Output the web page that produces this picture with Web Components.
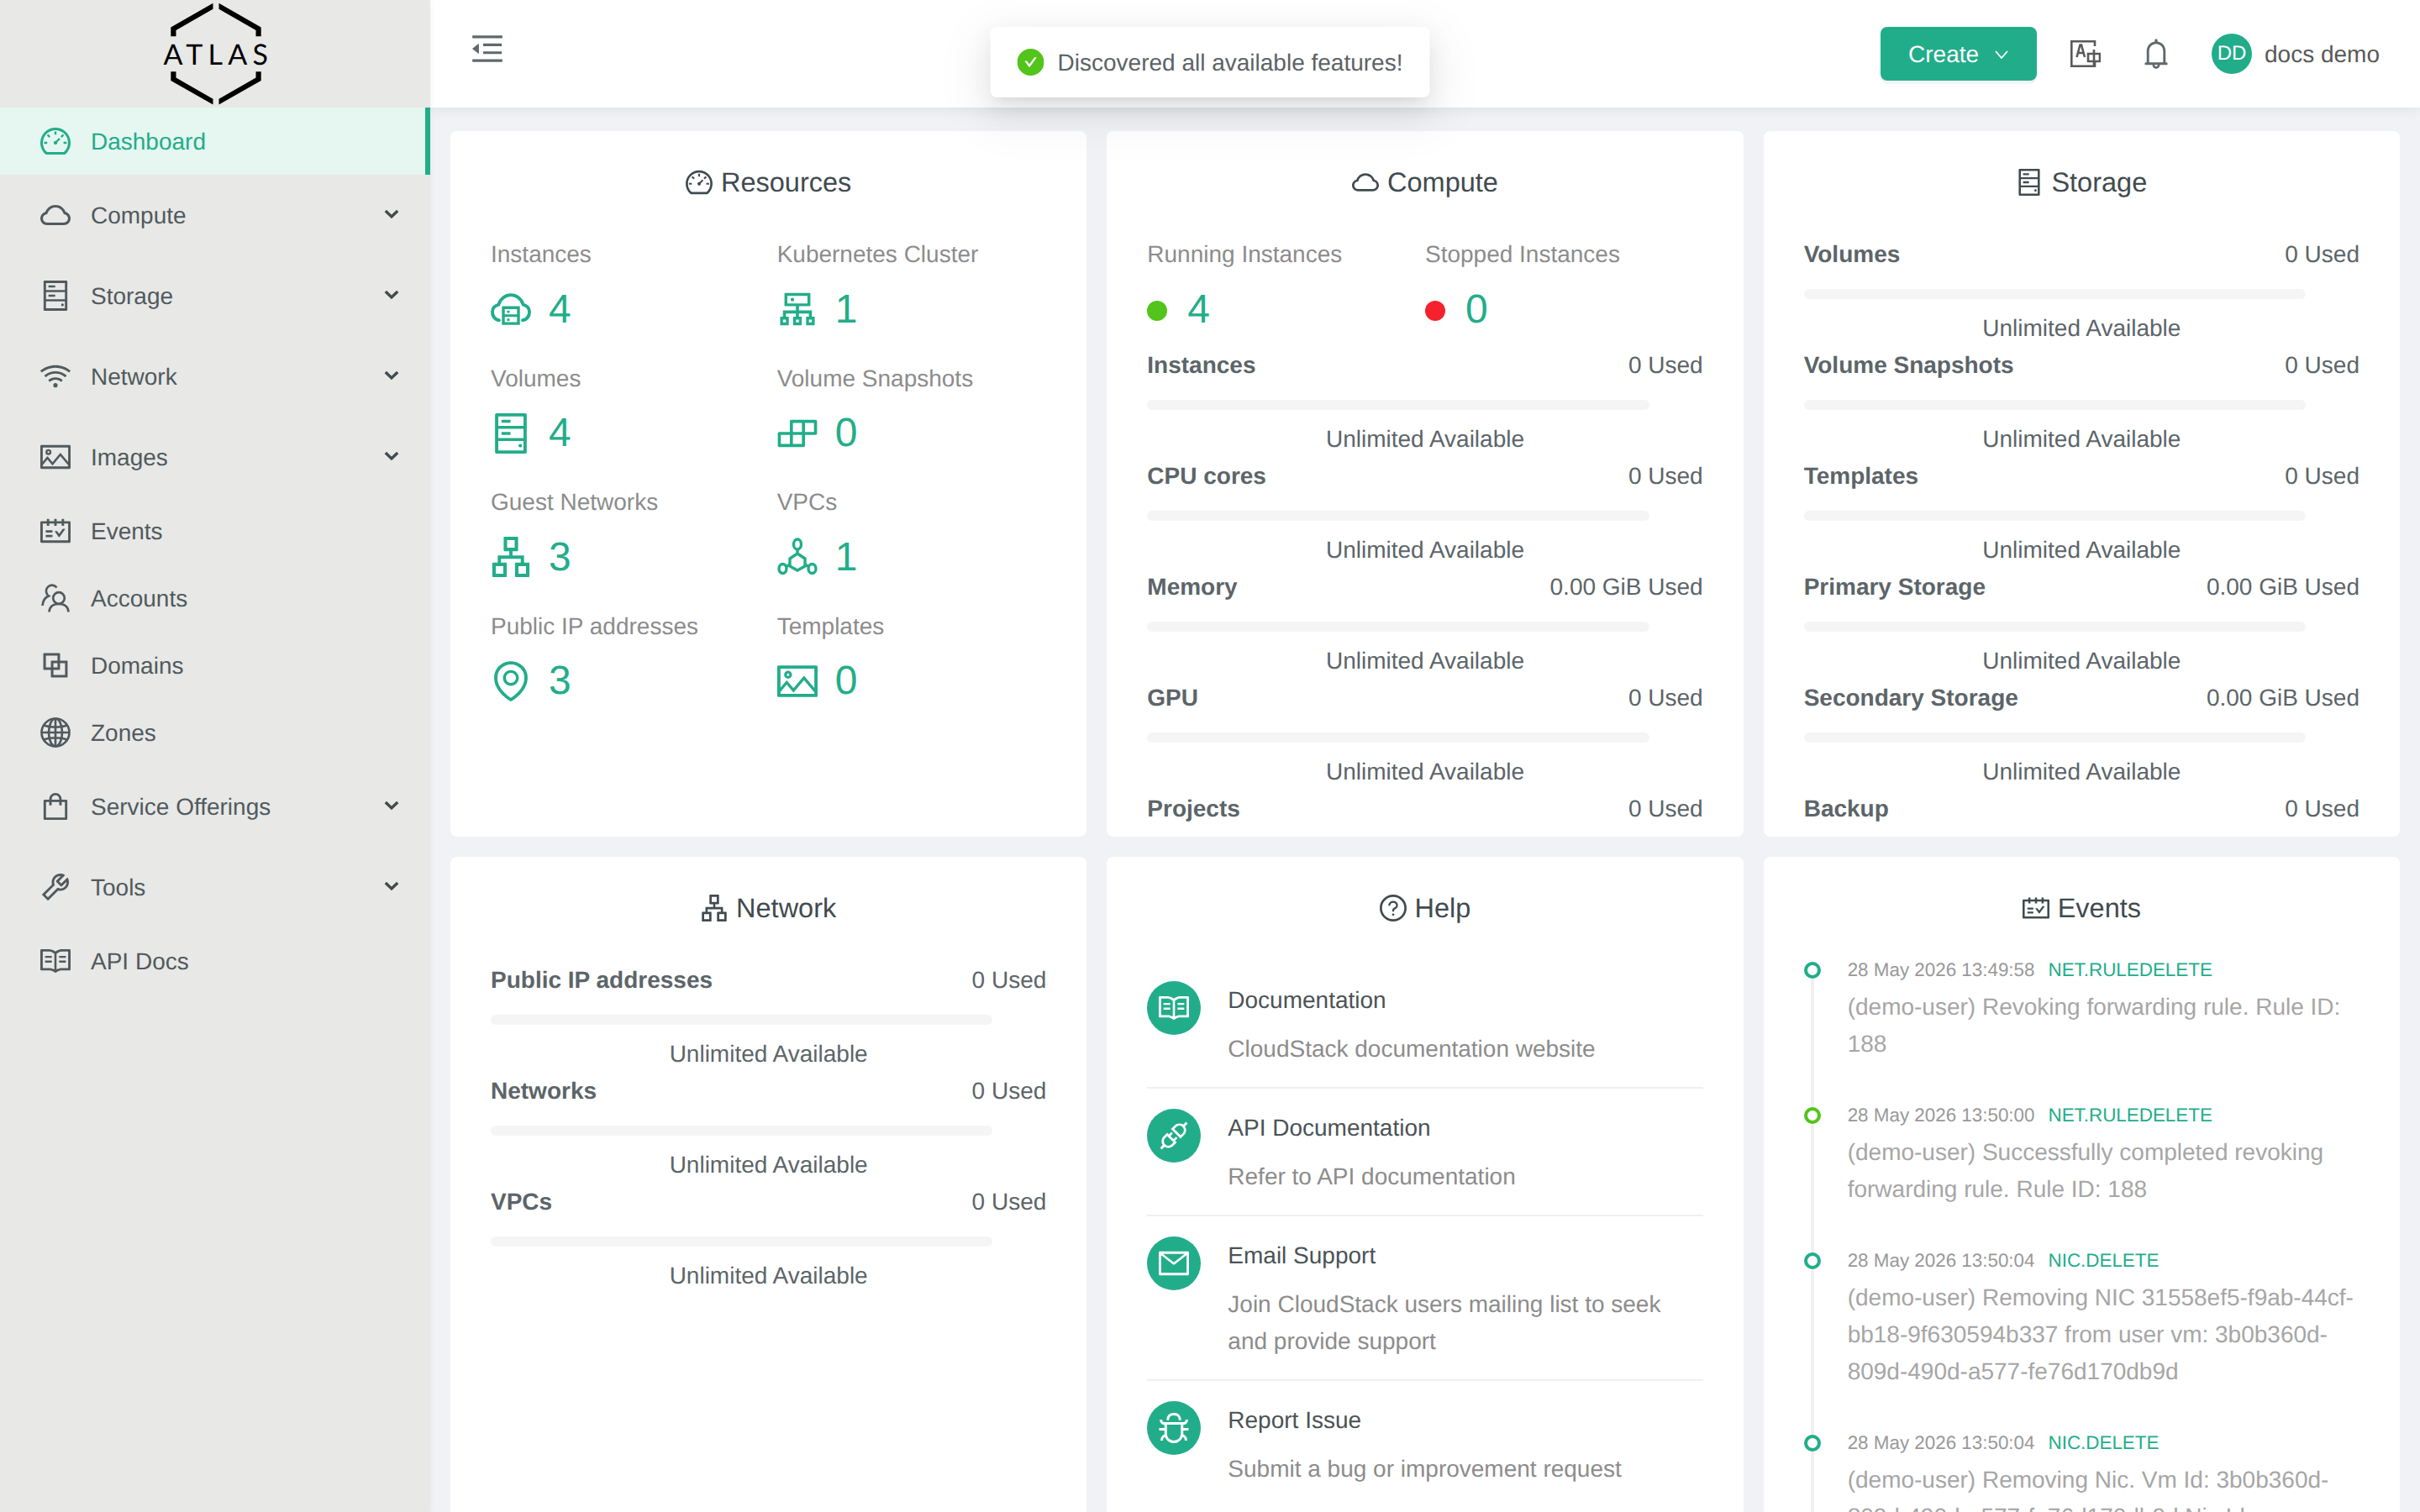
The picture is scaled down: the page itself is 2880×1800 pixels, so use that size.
<!DOCTYPE html>
<html>
<head>
<meta charset="utf-8">
<title>Dashboard</title>
<style>
    html, body {
        margin: 0;
        width: 2880px;
        height: 1800px;
        overflow: hidden;
        background: #f0f2f5;
        font-family: "Liberation Sans", Arial, sans-serif;
        font-size: 28px;
        text-rendering: geometricPrecision;
    }
</style>
</head>
<body>

<atlas-app>
    <atlas-sidebar slot="sidebar">
        <atlas-menu-item icon="dashboard" active>Dashboard</atlas-menu-item>
        <atlas-menu-item icon="cloud" arrow>Compute</atlas-menu-item>
        <atlas-menu-item icon="hdd" arrow>Storage</atlas-menu-item>
        <atlas-menu-item icon="wifi" arrow>Network</atlas-menu-item>
        <atlas-menu-item icon="picture" arrow>Images</atlas-menu-item>
        <atlas-menu-item icon="schedule">Events</atlas-menu-item>
        <atlas-menu-item icon="team">Accounts</atlas-menu-item>
        <atlas-menu-item icon="block">Domains</atlas-menu-item>
        <atlas-menu-item icon="global">Zones</atlas-menu-item>
        <atlas-menu-item icon="shopping" arrow>Service Offerings</atlas-menu-item>
        <atlas-menu-item icon="tool" arrow>Tools</atlas-menu-item>
        <atlas-menu-item icon="read">API Docs</atlas-menu-item>
    </atlas-sidebar>

    <atlas-header slot="header" initials="DD" user="docs demo"></atlas-header>

    <atlas-card icon="dashboard" heading="Resources">
        <atlas-stats gutter>
            <atlas-stat icon="cloudserver" value="4">Instances</atlas-stat>
            <atlas-stat icon="cluster" value="1">Kubernetes Cluster</atlas-stat>
            <atlas-stat icon="hdd" value="4">Volumes</atlas-stat>
            <atlas-stat icon="build" value="0">Volume Snapshots</atlas-stat>
            <atlas-stat icon="apartment" value="3">Guest Networks</atlas-stat>
            <atlas-stat icon="deployment" value="1">VPCs</atlas-stat>
            <atlas-stat icon="environment" value="3">Public IP addresses</atlas-stat>
            <atlas-stat icon="picture" value="0">Templates</atlas-stat>
        </atlas-stats>
    </atlas-card>

    <atlas-card icon="cloud" heading="Compute">
        <atlas-stats>
            <atlas-stat dot="#52c41a" value="4">Running Instances</atlas-stat>
            <atlas-stat dot="#f5222d" value="0">Stopped Instances</atlas-stat>
        </atlas-stats>
        <atlas-usage used="0 Used">Instances</atlas-usage>
        <atlas-usage used="0 Used">CPU cores</atlas-usage>
        <atlas-usage used="0.00 GiB Used">Memory</atlas-usage>
        <atlas-usage used="0 Used">GPU</atlas-usage>
        <atlas-usage used="0 Used">Projects</atlas-usage>
    </atlas-card>

    <atlas-card icon="hdd" heading="Storage">
        <atlas-usage used="0 Used">Volumes</atlas-usage>
        <atlas-usage used="0 Used">Volume Snapshots</atlas-usage>
        <atlas-usage used="0 Used">Templates</atlas-usage>
        <atlas-usage used="0.00 GiB Used">Primary Storage</atlas-usage>
        <atlas-usage used="0.00 GiB Used">Secondary Storage</atlas-usage>
        <atlas-usage used="0 Used">Backup</atlas-usage>
    </atlas-card>

    <atlas-card icon="apartment" heading="Network">
        <atlas-usage used="0 Used">Public IP addresses</atlas-usage>
        <atlas-usage used="0 Used">Networks</atlas-usage>
        <atlas-usage used="0 Used">VPCs</atlas-usage>
    </atlas-card>

    <atlas-card icon="question" heading="Help" style="--title-gap: 38px">
        <atlas-help-item icon="read" heading="Documentation">CloudStack documentation website</atlas-help-item>
        <atlas-help-item icon="api" heading="API Documentation">Refer to API documentation</atlas-help-item>
        <atlas-help-item icon="mail" heading="Email Support">Join CloudStack users mailing list to seek and provide support</atlas-help-item>
        <atlas-help-item icon="bug" heading="Report Issue" last>Submit a bug or improvement request</atlas-help-item>
    </atlas-card>

    <atlas-card icon="schedule" heading="Events" style="--title-gap: 26px">
        <atlas-event date="28 May 2026 13:49:58" type="NET.RULEDELETE">(demo-user) Revoking forwarding rule. Rule ID: 188</atlas-event>
        <atlas-event date="28 May 2026 13:50:00" type="NET.RULEDELETE" dot="#52c41a">(demo-user) Successfully completed revoking forwarding rule. Rule ID: 188</atlas-event>
        <atlas-event date="28 May 2026 13:50:04" type="NIC.DELETE">(demo-user) Removing NIC 31558ef5-f9ab-44cf-bb18-9f630594b337 from user vm: 3b0b360d-809d-490d-a577-fe76d170db9d</atlas-event>
        <atlas-event date="28 May 2026 13:50:04" type="NIC.DELETE">(demo-user) Removing Nic. Vm Id: 3b0b360d-809d-490d-a577-fe76d170db9d Nic Id:</atlas-event>
    </atlas-card>
</atlas-app>

<atlas-toast>Discovered all available features!</atlas-toast>

<script>
//check if customElements and ShadowDOM is supported/enabled
if (!(window.customElements && document.body.attachShadow)) {
    console.log("Shadow DOM or Custom Elements v1 not supported!");
}

const GREEN = '#22ad8a';

//filled icons on the usual 64 64 896 896 box
const ICON_PATHS = {
    cloud: 'M811.4 418.7C765.6 297.9 648.9 212 512.2 212S258.8 297.8 213 418.6C127.3 441.1 64 519.1 64 612c0 110.5 89.5 200 199.9 200h496.2C870.5 812 960 722.5 960 612c0-92.7-63.1-170.7-148.6-193.3zm36.3 281a123.07 123.07 0 0 1-87.6 36.3H263.9c-33.1 0-64.2-12.9-87.6-36.3A123.3 123.3 0 0 1 140 612c0-28 9.1-54.3 26.2-76.3a125.7 125.7 0 0 1 66.1-43.7l37.9-9.9 13.9-36.6c8.6-22.8 20.6-44.1 35.7-63.4a245.6 245.6 0 0 1 52.4-49.9c41.1-28.9 89.5-44.2 140-44.2s98.9 15.3 140 44.2c19.9 14 37.5 30.8 52.4 49.9 15.1 19.3 27.1 40.6 35.7 63.4l13.8 36.5 37.8 10c54.3 14.5 92.1 63.8 92.1 120 0 33.1-12.9 64.3-36.3 87.7z',
    dashboard: 'M924.8 385.6a446.7 446.7 0 0 0-96-142.4 446.7 446.7 0 0 0-142.4-96C631.1 123.8 572.5 112 512 112s-119.1 11.8-174.4 35.2a446.7 446.7 0 0 0-142.4 96 446.7 446.7 0 0 0-96 142.4C75.8 440.9 64 499.5 64 560c0 132.7 58.3 257.7 159.9 343.1l1.7 1.4c5.8 4.8 13.1 7.5 20.6 7.5h531.7c7.5 0 14.8-2.7 20.6-7.5l1.7-1.4C901.7 817.7 960 692.7 960 560c0-60.5-11.9-119.1-35.2-174.4zM761.4 836H262.6A371.12 371.12 0 0 1 140 560c0-99.4 38.7-192.8 109-263 70.3-70.3 163.7-109 263-109 99.4 0 192.8 38.7 263 109 70.3 70.3 109 163.7 109 263 0 105.6-44.5 205.5-122.6 276zM623.5 421.5a8.03 8.03 0 0 0-11.3 0L527.7 506c-18.7-5-39.4-.2-54.1 14.5a55.95 55.95 0 0 0 0 79.2 55.95 55.95 0 0 0 79.2 0 55.87 55.87 0 0 0 14.5-54.1l84.5-84.5c3.1-3.1 3.1-8.2 0-11.3l-28.3-28.3zM490 320h44c4.4 0 8-3.6 8-8v-80c0-4.4-3.6-8-8-8h-44c-4.4 0-8 3.6-8 8v80c0 4.4 3.6 8 8 8zm260 218v44c0 4.4 3.6 8 8 8h80c4.4 0 8-3.6 8-8v-44c0-4.4-3.6-8-8-8h-80c-4.4 0-8 3.6-8 8zm12.7-197.2l-31.1-31.1a8.03 8.03 0 0 0-11.3 0l-56.6 56.6a8.03 8.03 0 0 0 0 11.3l31.1 31.1c3.1 3.1 8.2 3.1 11.3 0l56.6-56.6c3.1-3.1 3.1-8.2 0-11.3zm-458.6-31.1a8.03 8.03 0 0 0-11.3 0l-31.1 31.1a8.03 8.03 0 0 0 0 11.3l56.6 56.6c3.1 3.1 8.2 3.1 11.3 0l31.1-31.1c3.1-3.1 3.1-8.2 0-11.3l-56.6-56.6zM262 530h-80c-4.4 0-8 3.6-8 8v44c0 4.4 3.6 8 8 8h80c4.4 0 8-3.6 8-8v-44c0-4.4-3.6-8-8-8z',
    hdd: 'M832 64H192c-17.7 0-32 14.3-32 32v832c0 17.7 14.3 32 32 32h640c17.7 0 32-14.3 32-32V96c0-17.7-14.3-32-32-32zm-600 72h560v208H232V136zm560 480H232V408h560v208zm0 272H232V680h560v208zM312 208h184c4.4 0 8 3.6 8 8v48c0 4.4-3.6 8-8 8H312c-4.4 0-8-3.6-8-8v-48c0-4.4 3.6-8 8-8zm0 272h184c4.4 0 8 3.6 8 8v48c0 4.4-3.6 8-8 8H312c-4.4 0-8-3.6-8-8v-48c0-4.4 3.6-8 8-8zm368 304a40 40 0 1 0 80 0 40 40 0 1 0-80 0z',
    wifi: 'M723 620.5C666.8 571.6 593.4 542 513 542s-153.8 29.6-210.1 78.6a8.1 8.1 0 0 0-.8 11.2l36 42.9c2.9 3.4 8 3.8 11.4.9C393.1 637.2 450.3 614 513 614s119.9 23.2 163.5 61.5c3.4 2.9 8.5 2.5 11.4-.9l36-42.9c2.8-3.3 2.4-8.3-.9-11.2zm117.4-140.1C751.7 406.5 637.6 362 513 362s-238.7 44.5-327.5 118.4a8.05 8.05 0 0 0-1 11.3l36 42.9c2.8 3.4 7.9 3.8 11.2 1C308 472.2 406.1 434 513 434s205 38.2 281.2 102.1c3.4 2.8 8.4 2.4 11.2-1l36-42.9c2.8-3.4 2.4-8.5-1-11.3zm116.7-139C835.7 241.8 680.3 182 511 182c-168.2 0-322.6 59-443.7 157.4a8 8 0 0 0-1.1 11.4l36 42.9c2.8 3.3 7.8 3.8 11.1 1.1C222 306.7 360.3 254 511 254c151.8 0 291 53.5 400 142.7 3.4 2.8 8.4 2.3 11.2-1.1l36-42.9c2.9-3.4 2.4-8.5-1.1-11.3zM448 778a64 64 0 1 0 128 0 64 64 0 1 0-128 0z',
    picture: 'M928 160H96c-17.7 0-32 14.3-32 32v640c0 17.7 14.3 32 32 32h832c17.7 0 32-14.3 32-32V192c0-17.7-14.3-32-32-32zm-40 632H136v-39.9l138.5-164.3 150.1 178L658.1 489 888 761.6V792zm0-129.8L664.2 396.8c-3.2-3.8-9-3.8-12.2 0L424.6 666.4l-144-170.7c-3.2-3.8-9-3.8-12.2 0L136 652.7V232h752v430.2zM304 456a88 88 0 1 0 0-176 88 88 0 0 0 0 176zm0-116c15.5 0 28 12.5 28 28s-12.5 28-28 28-28-12.5-28-28 12.5-28 28-28z',
    schedule: 'M928 224H768v-56c0-4.4-3.6-8-8-8h-56c-4.4 0-8 3.6-8 8v56H548v-56c0-4.4-3.6-8-8-8h-56c-4.4 0-8 3.6-8 8v56H328v-56c0-4.4-3.6-8-8-8h-56c-4.4 0-8 3.6-8 8v56H96c-17.7 0-32 14.3-32 32v576c0 17.7 14.3 32 32 32h832c17.7 0 32-14.3 32-32V256c0-17.7-14.3-32-32-32zm-40 568H136V296h120v56c0 4.4 3.6 8 8 8h56c4.4 0 8-3.6 8-8v-56h148v56c0 4.4 3.6 8 8 8h56c4.4 0 8-3.6 8-8v-56h148v56c0 4.4 3.6 8 8 8h56c4.4 0 8-3.6 8-8v-56h120v496zM416 496H232c-4.4 0-8 3.6-8 8v48c0 4.4 3.6 8 8 8h184c4.4 0 8-3.6 8-8v-48c0-4.4-3.6-8-8-8zm0 136H232c-4.4 0-8 3.6-8 8v48c0 4.4 3.6 8 8 8h184c4.4 0 8-3.6 8-8v-48c0-4.4-3.6-8-8-8zm308.2-177.4L620.6 598.3l-52.8-73.1c-3-4.2-7.8-6.6-12.9-6.6H500c-6.5 0-10.3 7.4-6.5 12.7l114.1 158.2a15.9 15.9 0 0 0 25.8 0l165-228.7c3.8-5.3 0-12.7-6.5-12.7H737c-5-.1-9.8 2.4-12.8 6.5z',
    block: 'M856 376H648V168c0-8.8-7.2-16-16-16H168c-8.8 0-16 7.2-16 16v464c0 8.8 7.2 16 16 16h208v208c0 8.8 7.2 16 16 16h464c8.8 0 16-7.2 16-16V392c0-8.8-7.2-16-16-16zM228 572V228h344v144H392c-8.8 0-16 7.2-16 16v184H228zm344-120v120H452V452h120zM796 796H452V648h180c8.8 0 16-7.2 16-16V452h148v344z',
    shopping: 'M832 312H696v-16c0-101.6-82.4-184-184-184s-184 82.4-184 184v16H192c-17.7 0-32 14.3-32 32v536c0 17.7 14.3 32 32 32h640c17.7 0 32-14.3 32-32V344c0-17.7-14.3-32-32-32zm-432-16c0-61.9 50.1-112 112-112s112 50.1 112 112v16H400v-16zm392 544H232V384h96v88c0 4.4 3.6 8 8 8h56c4.4 0 8-3.6 8-8v-88h224v88c0 4.4 3.6 8 8 8h56c4.4 0 8-3.6 8-8v-88h96v456z',
    tool: 'M876.6 239.5c-.5-.9-1.2-1.8-2-2.5-5-5-13.1-5-18.1 0L684.2 409.3l-67.9-67.9L788.7 169c.8-.8 1.4-1.6 2-2.5 3.6-6.1 1.6-13.9-4.5-17.5-98.2-58-226.8-44.7-311.3 39.7-67 67-89.2 162-66.5 247.4l-293 293c-3 3-2.8 7.9.3 11l169.7 169.7c3.1 3.1 8.1 3.3 11 .3l292.9-292.9c85.5 22.8 180.5.7 247.6-66.4 84.4-84.5 97.7-213.1 39.7-311.3zM786 499.8c-58.1 58.1-145.3 69.3-214.6 33.6l-8.8 8.8-.1-.1-274 274.1-79.2-79.2 230.1-230.1s0 .1.1.1l52.8-52.8c-35.7-69.3-24.5-156.5 33.6-214.6a184.2 184.2 0 0 1 144-53.5L537 318.9a32.05 32.05 0 0 0 0 45.3l124.5 124.5a32.05 32.05 0 0 0 45.3 0l132.8-132.8c3.7 51.8-14.4 104.8-53.6 143.9z',
    read: 'M928 161H699.2c-49.1 0-97.1 14.1-138.4 40.7L512 233l-48.8-31.3A255.2 255.2 0 0 0 324.8 161H96c-17.7 0-32 14.3-32 32v568c0 17.7 14.3 32 32 32h228.8c49.1 0 97.1 14.1 138.4 40.7l44.4 28.6c1.3.8 2.8 1.3 4.3 1.3s3-.4 4.3-1.3l44.4-28.6C602 807.1 650.1 793 699.2 793H928c17.7 0 32-14.3 32-32V193c0-17.7-14.3-32-32-32zM324.8 721H136V233h188.8c35.4 0 69.8 10.1 99.5 29.2l48.8 31.3 6.9 4.5v462c-47.6-25.6-100.8-39-155.2-39zm563.2 0H699.2c-54.4 0-107.6 13.4-155.2 39V298l6.9-4.5 48.8-31.3c29.7-19.1 64.1-29.2 99.5-29.2H888v488zM396.9 361H211.1c-3.9 0-7.1 3.4-7.1 7.5v45c0 4.1 3.2 7.5 7.1 7.5h185.7c3.9 0 7.1-3.4 7.1-7.5v-45c.1-4.1-3.1-7.5-7-7.5zm223.1 7.5v45c0 4.1 3.2 7.5 7.1 7.5h185.7c3.9 0 7.1-3.4 7.1-7.5v-45c0-4.1-3.2-7.5-7.1-7.5H627.1c-3.9 0-7.1 3.4-7.1 7.5zM396.9 501H211.1c-3.9 0-7.1 3.4-7.1 7.5v45c0 4.1 3.2 7.5 7.1 7.5h185.7c3.9 0 7.1-3.4 7.1-7.5v-45c.1-4.1-3.1-7.5-7-7.5zm416 0H627.1c-3.9 0-7.1 3.4-7.1 7.5v45c0 4.1 3.2 7.5 7.1 7.5h185.7c3.9 0 7.1-3.4 7.1-7.5v-45c.1-4.1-3.1-7.5-7-7.5z',
    question: 'M512 64C264.6 64 64 264.6 64 512s200.6 448 448 448 448-200.6 448-448S759.4 64 512 64zm0 820c-205.4 0-372-166.6-372-372s166.6-372 372-372 372 166.6 372 372-166.6 372-372 372zM623.6 316.7C593.6 290.4 554 276 512 276s-81.6 14.5-111.6 40.7C369.2 344 352 380.7 352 420v7.6c0 4.4 3.6 8 8 8h48c4.4 0 8-3.6 8-8V420c0-44.1 43.1-80 96-80s96 35.9 96 80c0 31.1-22 59.6-56.1 72.7-21.2 8.1-39.2 22.3-52.1 40.9-13.1 19-19.9 41.8-19.9 64.9V620c0 4.4 3.6 8 8 8h48c4.4 0 8-3.6 8-8v-22.7a48.3 48.3 0 0 1 30.9-44.8c59-22.7 97.1-74.7 97.1-132.5.1-39.3-17.1-76-48.3-103.3zM472 732a40 40 0 1 0 80 0 40 40 0 1 0-80 0z',
    cluster: 'M888 680h-54V540H546v-92h238c8.8 0 16-7.2 16-16V168c0-8.8-7.2-16-16-16H240c-8.8 0-16 7.2-16 16v264c0 8.8 7.2 16 16 16h238v92H190v140h-54c-4.4 0-8 3.6-8 8v176c0 4.4 3.6 8 8 8h176c4.4 0 8-3.6 8-8V688c0-4.4-3.6-8-8-8h-54v-72h220v72h-54c-4.4 0-8 3.6-8 8v176c0 4.4 3.6 8 8 8h176c4.4 0 8-3.6 8-8V688c0-4.4-3.6-8-8-8h-54v-72h220v72h-54c-4.4 0-8 3.6-8 8v176c0 4.4 3.6 8 8 8h176c4.4 0 8-3.6 8-8V688c0-4.4-3.6-8-8-8zM256 805.3c0 1.5-1.2 2.7-2.7 2.7h-58.7c-1.5 0-2.7-1.2-2.7-2.7v-58.7c0-1.5 1.2-2.7 2.7-2.7h58.7c1.5 0 2.7 1.2 2.7 2.7v58.7zm288 0c0 1.5-1.2 2.7-2.7 2.7h-58.7c-1.5 0-2.7-1.2-2.7-2.7v-58.7c0-1.5 1.2-2.7 2.7-2.7h58.7c1.5 0 2.7 1.2 2.7 2.7v58.7zM288 384V216h448v168H288zm544 421.3c0 1.5-1.2 2.7-2.7 2.7h-58.7c-1.5 0-2.7-1.2-2.7-2.7v-58.7c0-1.5 1.2-2.7 2.7-2.7h58.7c1.5 0 2.7 1.2 2.7 2.7v58.7zM360 300a40 40 0 1 0 80 0 40 40 0 1 0-80 0z',
    build: 'M916 210H376c-17.7 0-32 14.3-32 32v236H108c-17.7 0-32 14.3-32 32v272c0 17.7 14.3 32 32 32h540c17.7 0 32-14.3 32-32V546h236c17.7 0 32-14.3 32-32V242c0-17.7-14.3-32-32-32zm-504 68h200v200H412V278zm-68 468H144V546h200v200zm268 0H412V546h200v200zm268-268H680V278h200v200z',
    apartment: 'M908 640H804V488c0-4.4-3.6-8-8-8H548v-96h108c8.8 0 16-7.2 16-16V80c0-8.8-7.2-16-16-16H368c-8.8 0-16 7.2-16 16v288c0 8.8 7.2 16 16 16h108v96H228c-4.4 0-8 3.6-8 8v152H116c-8.8 0-16 7.2-16 16v288c0 8.8 7.2 16 16 16h288c8.8 0 16-7.2 16-16V656c0-8.8-7.2-16-16-16H292v-88h440v88H620c-8.8 0-16 7.2-16 16v288c0 8.8 7.2 16 16 16h288c8.8 0 16-7.2 16-16V656c0-8.8-7.2-16-16-16zm-564 76v168H176V716h168zm84-408V140h168v168H428zm420 576H680V716h168v168z',
    environment: 'M854.6 289.1a362.49 362.49 0 0 0-79.9-115.7 370.83 370.83 0 0 0-118.2-77.8C610.7 76.6 562.1 67 512 67c-50.1 0-98.7 9.6-144.5 28.5-44.3 18.3-84 44.5-118.2 77.8A363.6 363.6 0 0 0 169.4 289c-19.5 45-29.4 92.8-29.4 142 0 70.6 16.9 140.9 50.1 208.7 26.7 54.5 64 107.6 111 158.1 80.3 86.2 164.5 138.9 188.4 153a43.9 43.9 0 0 0 22.4 6.1c7.8 0 15.5-2 22.4-6.1 23.9-14.1 108.1-66.8 188.4-153 47-50.4 84.3-103.6 111-158.1C867.1 572 884 501.8 884 431.1c0-49.2-9.9-97-29.4-142zM512 880.2c-65.9-41.9-300-207.8-300-449.1 0-77.9 31.1-151.1 87.6-206.3C356.3 169.5 431.7 139 512 139s155.7 30.5 212.4 85.9C780.9 280 812 353.2 812 431.1c0 241.3-234.1 407.2-300 449.1zm0-617.2c-97.2 0-176 78.8-176 176s78.8 176 176 176 176-78.8 176-176-78.8-176-176-176zm79.2 255.2A111.6 111.6 0 0 1 512 551c-29.9 0-58-11.7-79.2-32.8A111.6 111.6 0 0 1 400 439c0-29.9 11.7-58 32.8-79.2C454 338.6 482.1 327 512 327c29.9 0 58 11.6 79.2 32.8C612.4 381 624 409.1 624 439c0 29.9-11.6 58-32.8 79.2z',
    api: 'M917.7 148.8l-42.4-42.4c-1.6-1.6-3.6-2.3-5.7-2.3s-4.1.8-5.7 2.3l-76.1 76.1a199.27 199.27 0 0 0-112.1-34.3c-51.2 0-102.4 19.5-141.5 58.6L432.3 308.7a8.03 8.03 0 0 0 0 11.3L704 591.7c1.6 1.6 3.6 2.3 5.7 2.3 2 0 4.1-.8 5.7-2.3l101.9-101.9c68.9-69 77-175.7 24.3-253.5l76.1-76.1c3.1-3.2 3.1-8.3 0-11.4zM769.1 441.7l-59.4 59.4-186.8-186.8 59.4-59.4c24.9-24.9 58.1-38.7 93.4-38.7 35.3 0 68.4 13.7 93.4 38.7 24.9 24.9 38.7 58.1 38.7 93.4 0 35.3-13.8 68.4-38.7 93.4zm-190.2 105a8.03 8.03 0 0 0-11.3 0L501 613.3 410.7 523l66.7-66.7c3.1-3.1 3.1-8.2 0-11.3L441 408.6a8.03 8.03 0 0 0-11.3 0L363 475.3l-43-43a7.85 7.85 0 0 0-5.7-2.3c-2 0-4.1.8-5.7 2.3L206.8 534.2c-68.9 69-77 175.7-24.3 253.5l-76.1 76.1a8.03 8.03 0 0 0 0 11.3l42.4 42.4c1.6 1.6 3.6 2.3 5.7 2.3s4.1-.8 5.7-2.3l76.1-76.1c33.7 22.9 72.9 34.3 112.1 34.3 51.2 0 102.4-19.5 141.5-58.6l101.9-101.9c3.1-3.1 3.1-8.2 0-11.3l-43-43 66.7-66.7c3.1-3.1 3.1-8.2 0-11.3l-36.6-36.2zM441.7 769.1a131.32 131.32 0 0 1-93.4 38.7c-35.3 0-68.4-13.7-93.4-38.7a131.32 131.32 0 0 1-38.7-93.4c0-35.3 13.7-68.4 38.7-93.4l59.4-59.4 186.8 186.8-59.4 59.4z',
    mail: 'M928 160H96c-17.7 0-32 14.3-32 32v640c0 17.7 14.3 32 32 32h832c17.7 0 32-14.3 32-32V192c0-17.7-14.3-32-32-32zm-40 110.8V792H136V270.8l-27.6-21.5 39.3-50.5 42.8 33.3h643.1l42.8-33.3 39.3 50.5-27.7 21.5zM833.6 232L512 482 190.4 232l-42.8-33.3-39.3 50.5 27.6 21.5 341.6 265.6a55.99 55.99 0 0 0 68.7 0L888 270.8l27.6-21.5-39.3-50.5-42.7 33.2z',
    bug: 'M304 280h56c4.4 0 8-3.6 8-8 0-28.3 5.9-53.2 17.1-73.5 10.6-19.4 26-34.8 45.4-45.4C450.9 142 475.7 136 504 136h16c28.3 0 53.2 5.9 73.5 17.1 19.4 10.6 34.8 26 45.4 45.4C650 218.9 656 243.7 656 272c0 4.4 3.6 8 8 8h56c4.4 0 8-3.6 8-8 0-40-8.8-76.7-25.9-108.1a184.31 184.31 0 0 0-74-74C596.7 72.8 560 64 520 64h-16c-40 0-76.7 8.8-108.1 25.9a184.31 184.31 0 0 0-74 74C304.8 195.3 296 232 296 272c0 4.4 3.6 8 8 8zM940 512H792V412c76.8 0 139-62.2 139-139 0-4.4-3.6-8-8-8h-60c-4.4 0-8 3.6-8 8a63 63 0 0 1-63 63H232a63 63 0 0 1-63-63c0-4.4-3.6-8-8-8h-60c-4.4 0-8 3.6-8 8 0 76.8 62.2 139 139 139v100H84c-4.4 0-8 3.6-8 8v56c0 4.4 3.6 8 8 8h148v96c0 6.5.2 13 .7 19.3C164.1 728.6 116 796.7 116 876c0 4.4 3.6 8 8 8h56c4.4 0 8-3.6 8-8 0-44.2 23.9-82.9 59.6-103.7a273 273 0 0 0 22.7 49c24.3 41.5 59 76.2 100.5 100.5S460.5 960 512 960s99.8-13.9 141.3-38.2a281.38 281.38 0 0 0 123.2-149.5A120 120 0 0 1 836 876c0 4.4 3.6 8 8 8h56c4.4 0 8-3.6 8-8 0-79.3-48.1-147.4-116.7-176.7.4-6.4.7-12.8.7-19.3v-96h148c4.4 0 8-3.6 8-8v-56c0-4.4-3.6-8-8-8zM716 680c0 36.8-9.7 72-27.8 102.9-17.7 30.3-43 55.6-73.3 73.3C584 874.3 548.8 884 512 884s-72-9.7-102.9-27.8c-30.3-17.7-55.6-43-73.3-73.3A202.75 202.75 0 0 1 308 680V412h408v268z',
    bell: 'M816 768h-24V428c0-141.1-104.3-257.7-240-277.1V112c0-22.1-17.9-40-40-40s-40 17.9-40 40v38.9c-135.7 19.4-240 136-240 277.1v340h-24c-17.7 0-32 14.3-32 32v32c0 4.4 3.6 8 8 8h216c0 61.8 50.2 112 112 112s112-50.2 112-112h216c4.4 0 8-3.6 8-8v-32c0-17.7-14.3-32-32-32zM512 888c-26.5 0-48-21.5-48-48h96c0 26.5-21.5 48-48 48zM304 768V428c0-55.6 21.6-107.8 60.9-147.1S456.4 220 512 220c55.6 0 107.8 21.6 147.1 60.9S720 372.4 720 428v340H304z',
    outdent: 'M408 442h480c4.4 0 8-3.6 8-8v-56c0-4.4-3.6-8-8-8H408c-4.4 0-8 3.6-8 8v56c0 4.4 3.6 8 8 8zm-8 204c0 4.4 3.6 8 8 8h480c4.4 0 8-3.6 8-8v-56c0-4.4-3.6-8-8-8H408c-4.4 0-8 3.6-8 8v56zm504-486H120c-4.4 0-8 3.6-8 8v56c0 4.4 3.6 8 8 8h784c4.4 0 8-3.6 8-8v-56c0-4.4-3.6-8-8-8zm0 632H120c-4.4 0-8 3.6-8 8v56c0 4.4 3.6 8 8 8h784c4.4 0 8-3.6 8-8v-56c0-4.4-3.6-8-8-8zM115.4 518.9L271.7 642c5.8 4.6 14.4.5 14.4-6.9V388.9c0-7.4-8.5-11.5-14.4-6.9L115.4 505.1a8.74 8.74 0 0 0 0 13.8z',
    check: 'M512 64C264.6 64 64 264.6 64 512s200.6 448 448 448 448-200.6 448-448S759.4 64 512 64zm193.5 301.7l-210.6 292a31.8 31.8 0 0 1-51.7 0L318.5 484.9c-3.8-5.3 0-12.7 6.5-12.7h46.9c10.2 0 19.9 4.9 25.9 13.3l71.2 98.8 157.2-218c6-8.3 15.6-13.3 25.9-13.3H699c6.5 0 10.3 7.4 6.5 12.7z',
    boxes: 'M704 446H320c-4.4 0-8 3.6-8 8v402c0 4.4 3.6 8 8 8h384c4.4 0 8-3.6 8-8V454c0-4.4-3.6-8-8-8zm-328 64h272v117H376V510zm272 290H376V683h272v117zM424 748a32 32 0 1 0 64 0 32 32 0 1 0-64 0zm0-178a32 32 0 1 0 64 0 32 32 0 1 0-64 0z'
};

//stroked icons, each with its own box
const ICON_SVGS = {
    team: `<svg viewBox="0 0 36 36" fill="none" stroke="currentColor" stroke-width="2.7">
        <circle cx="22" cy="18" r="6.8"/>
        <path d="M10.5 34.5C11 28 15.5 25 22 25s11 3 11.5 9.500"/>
        <path d="M19.500 5.500A7 7 0 1 0 10 15.500C6 17 3 21 2.500 27"/></svg>`,
    global: `<svg viewBox="0 0 36 36" fill="none" stroke="currentColor" stroke-width="2.700">
        <circle cx="18" cy="18" r="16.500"/>
        <ellipse cx="18" cy="18" rx="8" ry="16.500"/>
        <path d="M18 1.500V34.500M1.500 18H34.500M4 9.500C12 12.500 24 12.500 32 9.500M4 26.500C12 23.500 24 23.500 32 26.500"/></svg>`,
    deployment: `<svg viewBox="0 0 48 48" fill="none" stroke="currentColor" stroke-width="3.400">
        <ellipse cx="24" cy="9" rx="4.500" ry="6"/>
        <ellipse cx="6.500" cy="38" rx="4.500" ry="5.500"/>
        <ellipse cx="41.500" cy="38" rx="4.500" ry="5.500"/>
        <path d="M24 15V20L33 26V35L24 40L15 35V26L24 20M10.500 35.500L15 33M37.500 35.500L33 33"/></svg>`,
    translate: `<svg viewBox="0 0 36 32" fill="none" stroke="currentColor" stroke-width="2.600">
        <path d="M29 7V1.300H1.300V30.700H29V26"/>
        <path d="M7.500 20L11.500 5.500H13L17 20M9 15H15.500"/>
        <path d="M21 16H35V25H21ZM28 11V32"/></svg>`,
    cloudserver: `<svg viewBox="64 64 896 896"><path fill="currentColor" d="${ICON_PATHS.boxes}"/>
        <path fill="none" stroke="currentColor" stroke-width="72" stroke-linecap="round" d="M250 760C160 750 100 670 100 572C100 490 160 430 240 410C280 280 390 198 512 198C634 198 744 280 784 410C864 430 924 490 924 572C924 670 864 750 774 760"/></svg>`
};

/*
class AtlasIcon
draws one icon out of the two tables above, sized by --icon-size
*/
class AtlasIcon extends HTMLElement {
    constructor() {
        super();
        this.attachShadow({mode: 'open'});
    }

    connectedCallback() {
        const name = this.getAttribute('name');
        const svg = ICON_SVGS[name] ||
            `<svg viewBox="64 64 896 896"><path fill="currentColor" d="${ICON_PATHS[name]}"/></svg>`;
        this.shadowRoot.innerHTML = `
            <style>
                :host {
                    display: inline-flex;
                    flex: none;
                    width: var(--icon-size, 36px);
                    height: var(--icon-size, 36px);
                }
                svg { width: 100%; height: 100%; display: block; }
            </style>
            ${svg}
        `;
    }
}

/*
class AtlasApp
page frame: sidebar on the left, header and the card grid on the right
*/
class AtlasApp extends HTMLElement {
    constructor() {
        super();
        this.attachShadow({mode: 'open'}).innerHTML = `
            <style>
                :host {
                    display: grid;
                    grid-template-columns: 512px 1fr;
                    grid-template-rows: 128px auto;
                    height: 1800px;
                }
                .side { grid-row: 1 / 3; }
                .cards {
                    display: grid;
                    grid-template-columns: repeat(3, minmax(0, 1fr));
                    grid-auto-rows: 840px;
                    gap: 24px;
                    padding: 28px 24px 0;
                }
            </style>
            <div class="side"><slot name="sidebar"></slot></div>
            <slot name="header"></slot>
            <div class="cards"><slot></slot></div>
        `;
    }
}

/*
class AtlasSidebar
grey column with the logo on top and the menu items below
*/
class AtlasSidebar extends HTMLElement {
    constructor() {
        super();
        this.attachShadow({mode: 'open'}).innerHTML = `
            <style>
                :host {
                    display: flex;
                    flex-direction: column;
                    height: 1800px;
                    background: #e8e8e6;
                    box-shadow: 0 0 8px rgba(0, 21, 41, .06);
                    position: relative;
                    z-index: 2;
                }
                svg { display: block; flex: none; }
                text { font-family: Lato, sans-serif; font-size: 34px; letter-spacing: 6.200px; }
            </style>
            <svg width="512" height="128" viewBox="0 0 512 128">
                <path id="hex" d="M253.500 3.800V10.700L209.500 36V43.200H203.300V32.500Z"/>
                <use href="#hex" transform="matrix(-1 0 0 1 514 0)"/>
                <use href="#hex" transform="matrix(1 0 0 -1 0 128.400)"/>
                <use href="#hex" transform="matrix(-1 0 0 -1 514 128.400)"/>
                <text x="194.500" y="76.500">ATLAS</text>
            </svg>
            <slot></slot>
        `;
    }
}

/*
class AtlasMenuItem
one sidebar row
attributes: icon, arrow (has a submenu), active
*/
class AtlasMenuItem extends HTMLElement {
    constructor() {
        super();
        this.attachShadow({mode: 'open'});
    }

    connectedCallback() {
        const arrow = this.hasAttribute('arrow') ?
            `<svg class="arrow" width="18" height="12" viewBox="0 0 18 12"><path d="M1.800 2.500L9 9.500L16.200 2.500" fill="none" stroke="currentColor" stroke-width="3.400"/></svg>` : '';
        this.shadowRoot.innerHTML = `
            <style>
                :host {
                    display: flex;
                    align-items: center;
                    flex: none;
                    height: 80px;
                    padding: 0 37px 0 48px;
                    color: #505a5e;
                    font-size: 28px;
                    --icon-size: 36px;
                }
                :host([arrow]) { margin: 8px 0; }
                :host([active]) {
                    color: ${GREEN};
                    background: #e6f6f1;
                    box-shadow: inset -6px 0 0 ${GREEN};
                }
                .label { margin-left: 24px; padding-top: 2px; flex: 1; white-space: nowrap; }
                .arrow { color: #414b4e; transform: translateY(-1.500px); }
            </style>
            <atlas-icon name="${this.getAttribute('icon')}"></atlas-icon>
            <span class="label"><slot></slot></span>
            ${arrow}
        `;
    }
}

/*
class AtlasHeader
white top bar
attributes: initials, user
*/
class AtlasHeader extends HTMLElement {
    constructor() {
        super();
        this.attachShadow({mode: 'open'});
    }

    connectedCallback() {
        this.shadowRoot.innerHTML = `
            <style>
                :host {
                    display: flex;
                    align-items: center;
                    height: 128px;
                    padding: 0 48px 0 48px;
                    background: #fff;
                    box-shadow: 0 2px 16px rgba(0, 21, 41, .08);
                    position: relative;
                    z-index: 1;
                    color: #595959;
                    font-size: 28px;
                }
                .trigger { --icon-size: 40px; color: #5f696c; transform: translateY(-6px); }
                .spacer { flex: 1; }
                .create {
                    display: flex;
                    align-items: center;
                    box-sizing: border-box;
                    width: 186px;
                    height: 64px;
                    padding: 2px 0 0 33px;
                    border-radius: 8px;
                    background: ${GREEN};
                    color: #fff;
                    box-shadow: 0 4px 0 rgba(0, 0, 0, .045);
                }
                .create svg { margin-left: 19px; }
                .translate { width: 36px; height: 32px; margin-left: 40px; color: #595959; --icon-size: 36px; }
                .bell { margin: 0 48px 0 48px; color: #5f696c; --icon-size: 36px; }
                .avatar {
                    display: flex;
                    align-items: center;
                    justify-content: center;
                    width: 48px;
                    height: 48px;
                    border-radius: 50%;
                    background: ${GREEN};
                    color: #fff;
                    font-size: 24px;
                    margin-right: 15px;
                }
                .name { padding-top: 2px; }
            </style>
            <atlas-icon class="trigger" name="outdent"></atlas-icon>
            <span class="spacer"></span>
            <div class="create">Create
                <svg width="16" height="10" viewBox="0 0 16 10"><path d="M1 1L8 9L15 1" fill="none" stroke="currentColor" stroke-width="1.800"/></svg>
            </div>
            <atlas-icon class="translate" name="translate"></atlas-icon>
            <atlas-icon class="bell" name="bell"></atlas-icon>
            <span class="avatar">${this.getAttribute('initials')}</span>
            <span class="name">${this.getAttribute('user')}</span>
        `;
    }
}

/*
class AtlasToast
message floating on top of the header
*/
class AtlasToast extends HTMLElement {
    constructor() {
        super();
        this.attachShadow({mode: 'open'}).innerHTML = `
            <style>
                :host {
                    position: absolute;
                    top: 32px;
                    left: 50%;
                    transform: translateX(-50%);
                    z-index: 5;
                    display: flex;
                    align-items: center;
                    height: 84px;
                    box-sizing: border-box;
                    padding: 0 32px;
                    background: #fff;
                    border-radius: 8px;
                    color: #5c6366;
                    font-size: 28px;
                    white-space: nowrap;
                    box-shadow: 0 6px 12px -8px rgba(0, 0, 0, .12), 0 12px 32px rgba(0, 0, 0, .08), 0 18px 56px 16px rgba(0, 0, 0, .05);
                }
                atlas-icon { --icon-size: 32px; color: #52c41a; margin-right: 16px; }
                span { padding-top: 2px; }
            </style>
            <atlas-icon name="check"></atlas-icon>
            <span><slot></slot></span>
        `;
    }
}

/*
class AtlasCard
white panel with a centered icon + heading, clips what does not fit
attributes: icon, heading
*/
class AtlasCard extends HTMLElement {
    constructor() {
        super();
        this.attachShadow({mode: 'open'});
    }

    connectedCallback() {
        this.shadowRoot.innerHTML = `
            <style>
                :host {
                    display: block;
                    background: #fff;
                    border-radius: 8px;
                    overflow: hidden;
                    padding: 36px 48px 0;
                    min-width: 0;
                }
                .heading {
                    display: flex;
                    align-items: center;
                    justify-content: center;
                    gap: 10px;
                    height: 50px;
                    margin-bottom: var(--title-gap, 39px);
                    font-size: 32.500px;
                    color: #414b4f;
                    --icon-size: 32px;
                }
            </style>
            <div class="heading">
                <atlas-icon name="${this.getAttribute('icon')}"></atlas-icon>
                <span>${this.getAttribute('heading')}</span>
            </div>
            <slot></slot>
        `;
    }
}

/*
class AtlasStats
two column grid of AtlasStat, 'gutter' spreads the rows and columns of the resources card
*/
class AtlasStats extends HTMLElement {
    constructor() {
        super();
        this.attachShadow({mode: 'open'}).innerHTML = `
            <style>
                :host {
                    display: grid;
                    grid-template-columns: 1fr 1fr;
                    grid-auto-rows: 132px;
                }
                :host([gutter]) {
                    column-gap: 20px;
                    grid-auto-rows: 147.500px;
                }
            </style>
            <slot></slot>
        `;
    }
}

/*
class AtlasStat
label with a big number below it, the number has an icon or a coloured dot
attributes: icon, dot, value
*/
class AtlasStat extends HTMLElement {
    constructor() {
        super();
        this.attachShadow({mode: 'open'});
    }

    connectedCallback() {
        const dot = this.getAttribute('dot');
        const mark = dot ?
            `<span class="dot" style="background:${dot}"></span>` :
            `<atlas-icon name="${this.getAttribute('icon')}"></atlas-icon>`;
        this.shadowRoot.innerHTML = `
            <style>
                :host { display: block; white-space: nowrap; }
                .label { height: 44px; line-height: 44px; color: #8c8c8c; font-size: 28px; }
                .value {
                    display: flex;
                    align-items: center;
                    height: 86px;
                    font-size: 48px;
                    color: ${GREEN};
                    --icon-size: 48px;
                }
                atlas-icon { margin-right: 21px; }
                .dot {
                    width: 24px;
                    height: 24px;
                    border-radius: 50%;
                    margin: 4px 24px 0 0;
                }
            </style>
            <div class="label"><slot></slot></div>
            <div class="value">${mark}<span>${this.getAttribute('value')}</span></div>
        `;
    }
}

/*
class AtlasUsage
resource usage row: name, used amount, empty bar and the available amount
attributes: used
*/
class AtlasUsage extends HTMLElement {
    constructor() {
        super();
        this.attachShadow({mode: 'open'});
    }

    connectedCallback() {
        this.shadowRoot.innerHTML = `
            <style>
                :host { display: block; font-size: 28px; line-height: 44px; color: #5c6569; }
                .top { display: flex; justify-content: space-between; }
                .name { font-weight: bold; }
                .bar {
                    height: 12px;
                    margin: 19px 64px 13px 0;
                    border-radius: 12px;
                    background: #f5f5f5;
                }
                .rest { text-align: center; }
            </style>
            <div class="top">
                <span class="name"><slot></slot></span>
                <span>${this.getAttribute('used')}</span>
            </div>
            <div class="bar"></div>
            <div class="rest">Unlimited Available</div>
        `;
    }
}

/*
class AtlasHelpItem
help link: round icon, heading and description
attributes: icon, heading, last (no line below)
*/
class AtlasHelpItem extends HTMLElement {
    constructor() {
        super();
        this.attachShadow({mode: 'open'});
    }

    connectedCallback() {
        this.shadowRoot.innerHTML = `
            <style>
                :host {
                    display: flex;
                    padding: 24px 0 23px;
                    border-bottom: 2px solid #f0f0f0;
                    font-size: 28px;
                    line-height: 44px;
                }
                :host([last]) { border-bottom: 0; }
                .round {
                    display: flex;
                    align-items: center;
                    justify-content: center;
                    flex: none;
                    width: 64px;
                    height: 64px;
                    margin-right: 32px;
                    border-radius: 50%;
                    background: ${GREEN};
                    color: #fff;
                    --icon-size: 36px;
                }
                .heading { color: #4b5356; padding-top: 1px; margin-bottom: 14px; }
                .text { color: #8c8c8c; }
            </style>
            <div class="round"><atlas-icon name="${this.getAttribute('icon')}"></atlas-icon></div>
            <div>
                <div class="heading">${this.getAttribute('heading')}</div>
                <div class="text"><slot></slot></div>
            </div>
        `;
    }
}

/*
class AtlasEvent
one timeline entry
attributes: date, type, dot (colour of the ring)
*/
class AtlasEvent extends HTMLElement {
    constructor() {
        super();
        this.attachShadow({mode: 'open'});
    }

    connectedCallback() {
        const ring = this.getAttribute('dot') || GREEN;
        this.shadowRoot.innerHTML = `
            <style>
                :host {
                    display: block;
                    position: relative;
                    padding: 0 0 40px 52px;
                    font-size: 28px;
                    line-height: 44px;
                    color: #a6a6a6;
                }
                .tail {
                    position: absolute;
                    left: 8px;
                    top: 22px;
                    bottom: -22px;
                    width: 4px;
                    background: #f0f0f0;
                }
                .ring {
                    position: absolute;
                    left: 0;
                    top: 13px;
                    width: 20px;
                    height: 20px;
                    box-sizing: border-box;
                    border: 4px solid ${ring};
                    border-radius: 50%;
                    background: #fff;
                }
                .line { height: 45px; line-height: 46px; font-size: 22.400px; white-space: nowrap; color: #999; }
                .type { color: ${GREEN}; margin-left: 16px; }
            </style>
            <span class="tail"></span>
            <span class="ring"></span>
            <div class="line">${this.getAttribute('date')}<span class="type">${this.getAttribute('type')}</span></div>
            <div><slot></slot></div>
        `;
    }
}

window.customElements.define('atlas-icon', AtlasIcon);
window.customElements.define('atlas-app', AtlasApp);
window.customElements.define('atlas-sidebar', AtlasSidebar);
window.customElements.define('atlas-menu-item', AtlasMenuItem);
window.customElements.define('atlas-header', AtlasHeader);
window.customElements.define('atlas-toast', AtlasToast);
window.customElements.define('atlas-card', AtlasCard);
window.customElements.define('atlas-stats', AtlasStats);
window.customElements.define('atlas-stat', AtlasStat);
window.customElements.define('atlas-usage', AtlasUsage);
window.customElements.define('atlas-help-item', AtlasHelpItem);
window.customElements.define('atlas-event', AtlasEvent);
</script>
</body>
</html>
